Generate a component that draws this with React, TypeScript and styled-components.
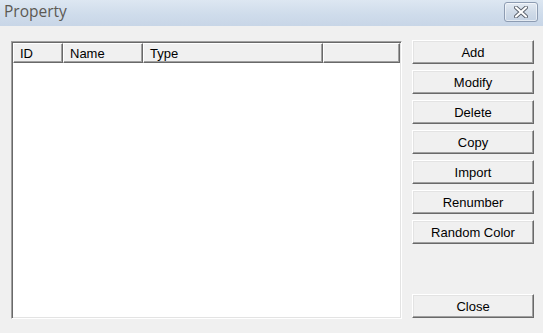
import React from 'react';
import styled, { createGlobalStyle } from 'styled-components';

const GlobalStyle = createGlobalStyle`
	html, body {
		margin: 0;
		padding: 0;
		background: #f0f0f0;
	}
	body {
		font-family: 'Liberation Sans', Arial, sans-serif;
	}
`;

const Window = styled.div`
	width: 543px;
	height: 333px;
	display: flex;
	flex-direction: column;
	background: #f0f0f0;
	overflow: hidden;
`;

const TitleBar = styled.div`
	height: 26px;
	flex: none;
	display: flex;
	align-items: center;
	justify-content: space-between;
	padding: 0 5px 0 4px;
	background: linear-gradient(to bottom, #dde7f2 0%, #cfdceb 55%, #c8d6e7 100%);
`;

const Title = styled.span`
	font-family: 'Open Sans', 'Noto Sans', sans-serif;
	font-size: 15.5px;
	color: #5c5954;
	margin-top: -4px;
`;

const CloseX = styled.button`
	width: 34px;
	height: 20px;
	margin-top: -2px;
	padding: 0;
	display: flex;
	align-items: center;
	justify-content: center;
	border: 1px solid #8d9cb2;
	border-radius: 3px;
	background: linear-gradient(to bottom, #e3eaf3 0%, #d0dbe8 50%, #c4d2e3 100%);
	box-shadow: inset 0 0 0 1px rgba(255, 255, 255, 0.55);
`;

const Body = styled.div`
	flex: 1;
	display: flex;
	gap: 10px;
	padding: 15px 9px 14px 11px;
`;

const ListView = styled.div`
	width: 391px;
	box-sizing: border-box;
	display: flex;
	flex-direction: column;
	background: #ffffff;
	border-top: 1px solid #a0a0a0;
	border-left: 1px solid #a0a0a0;
	border-bottom: 1px solid #ffffff;
	border-right: 1px solid #ffffff;
	box-shadow: inset 1px 1px 0 #696969, inset -1px -1px 0 #e3e3e3;
	padding: 1px 1px 1px 1px;
`;

const HeaderRow = styled.div`
	display: flex;
	height: 20px;
	flex: none;
`;

const HeaderCell = styled.div<{ $w?: number }>`
	${(p) => (p.$w ? `width: ${p.$w}px; flex: none;` : 'flex: 1;')}
	box-sizing: border-box;
	display: flex;
	align-items: center;
	padding-left: 6px;
	font-size: 13px;
	color: #000000;
	background: #f0f0f0;
	border-top: 1px solid #ffffff;
	border-left: 1px solid #ffffff;
	border-right: 1px solid #696969;
	border-bottom: 1px solid #696969;
	box-shadow: inset -1px -1px 0 #a0a0a0;
`;

const ButtonColumn = styled.div`
	width: 122px;
	display: flex;
	flex-direction: column;
	gap: 6px;
	margin: -1px 0 1px;
`;

const DlgButton = styled.button<{ $push?: boolean }>`
	height: 24px;
	flex: none;
	box-sizing: border-box;
	padding: 0;
	font-family: 'Liberation Sans', Arial, sans-serif;
	font-size: 13px;
	color: #000000;
	background: #f0f0f0;
	border-top: 1px solid #ffffff;
	border-left: 1px solid #ffffff;
	border-right: 1px solid #696969;
	border-bottom: 1px solid #696969;
	box-shadow: inset -1px -1px 0 #a0a0a0, inset 1px 1px 0 #e3e3e3;
	${(p) => (p.$push ? 'margin-top: auto;' : '')}
`;

const columns = [
	{ label: 'ID', w: 50 },
	{ label: 'Name', w: 80 },
	{ label: 'Type', w: 180 },
	{ label: '' }
];

const actions = ['Add', 'Modify', 'Delete', 'Copy', 'Import', 'Renumber', 'Random Color'];

export default function App() {
	return (
		<>
			<GlobalStyle />
			<Window>
				<TitleBar>
					<Title>Property</Title>
					<CloseX aria-label='Close'>
						<svg width='14' height='12' viewBox='0 0 14 12'>
							<path d='M2 1.5 L12 10.5 M12 1.5 L2 10.5' stroke='#59606b' strokeWidth='4' strokeLinecap='round' />
							<path d='M2 1.5 L12 10.5 M12 1.5 L2 10.5' stroke='#ffffff' strokeWidth='2.2' strokeLinecap='round' />
						</svg>
					</CloseX>
				</TitleBar>
				<Body>
					<ListView>
						<HeaderRow>
							{columns.map((c, i) => (
								<HeaderCell key={i} $w={c.w}>
									{c.label}
								</HeaderCell>
							))}
						</HeaderRow>
					</ListView>
					<ButtonColumn>
						{actions.map((a) => (
							<DlgButton key={a}>{a}</DlgButton>
						))}
						<DlgButton $push>Close</DlgButton>
					</ButtonColumn>
				</Body>
			</Window>
		</>
	);
}
